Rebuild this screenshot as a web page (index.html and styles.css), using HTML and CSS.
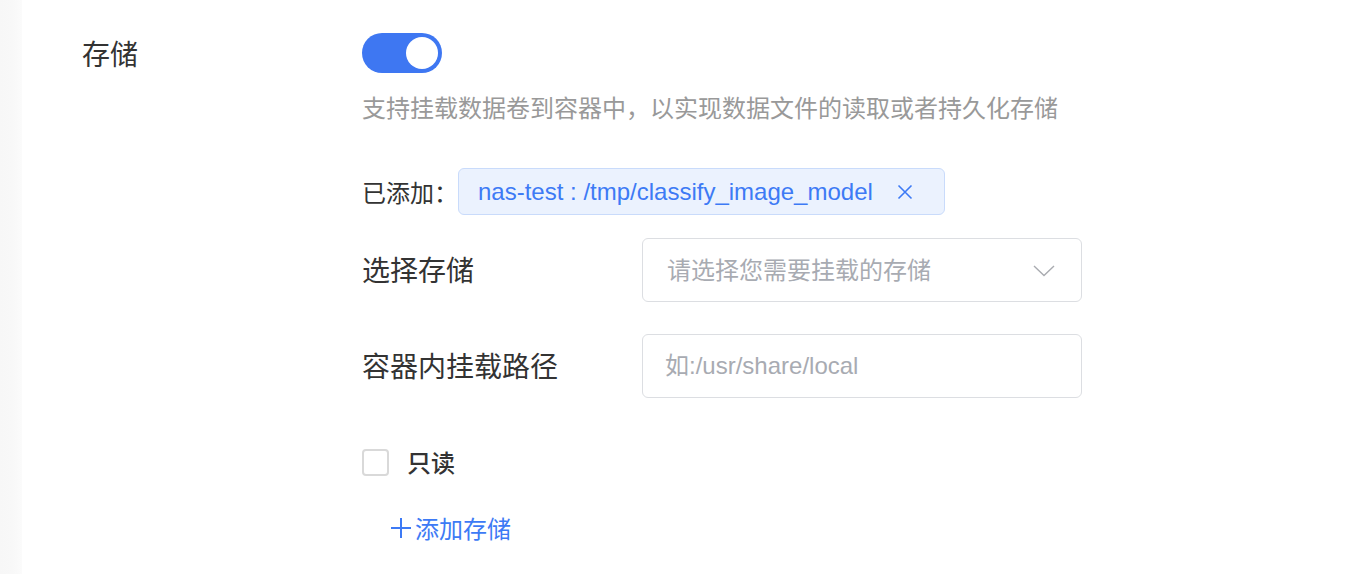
FILE: index.html
```html
<!DOCTYPE html>
<html lang="zh">
<head>
<meta charset="utf-8">
<title>存储</title>
<link rel="stylesheet" href="styles.css">
</head>
<body>
<div class="page">
  <div class="edge"></div>
  <div class="content">
    <div class="label-main">存储</div>
    <div class="fields">
      <div class="switch"><span class="knob"></span></div>
      <div class="desc">支持挂载数据卷到容器中，以实现数据文件的读取或者持久化存储</div>
      <div class="added">
        <span class="added-label">已添加：</span>
        <span class="tag">nas-test : /tmp/classify_image_model
          <svg class="tag-close" width="16" height="16" viewBox="0 0 16 16"><path d="M1.5 1.5 L14.5 14.5 M14.5 1.5 L1.5 14.5" stroke="#3d7af5" stroke-width="1.6" fill="none"/></svg>
        </span>
      </div>
      <div class="form-row first">
        <div class="form-label">选择存储</div>
        <div class="control">
          <span class="placeholder">请选择您需要挂载的存储</span>
          <svg class="chevron" width="22" height="12" viewBox="0 0 22 12"><path d="M1 1 L11 10.5 L21 1" stroke="#a9abb0" stroke-width="1.4" fill="none"/></svg>
        </div>
      </div>
      <div class="form-row">
        <div class="form-label">容器内挂载路径</div>
        <div class="control">
          <span class="placeholder input-ph">如:/usr/share/local</span>
        </div>
      </div>
      <label class="check-row">
        <span class="checkbox"></span>
        <span class="check-text">只读</span>
      </label>
      <div class="add-link">
        <svg class="plus" width="22" height="22" viewBox="0 0 22 22"><path d="M11 1 V21 M1 11 H21" stroke="#3d7af5" stroke-width="2" fill="none"/></svg>
        <span>添加存储</span>
      </div>
    </div>
  </div>
</div>
</body>
</html>
```

FILE: styles.css
```css
html, body {
  margin: 0;
  padding: 0;
  background: #ffffff;
}

body {
  font-family: "Noto Sans CJK SC", "Liberation Sans", sans-serif;
  color: #333333;
}

.page {
  display: flex;
  min-height: 574px;
}

.edge {
  width: 22px;
  flex: none;
  background: linear-gradient(to right, #f7f7f7 0%, #f8f8f8 55%, #fbfbfb 100%);
}

.content {
  flex: 1;
  display: flex;
  padding: 33px 0 0 60px;
}

.label-main {
  width: 280px;
  font-size: 28px;
  line-height: 40px;
  height: 40px;
  color: #333;
}

.fields {
  display: flex;
  flex-direction: column;
  align-items: flex-start;
}

.switch {
  width: 80px;
  height: 40px;
  border-radius: 20px;
  background: #3e77f2;
  display: flex;
  align-items: center;
  justify-content: flex-end;
  padding: 0 4px;
  box-sizing: border-box;
}

.knob {
  width: 32px;
  height: 32px;
  border-radius: 50%;
  background: #ffffff;
}

.desc {
  margin-top: 17px;
  font-size: 24px;
  line-height: 34px;
  color: #999999;
}

.added {
  margin-top: 44px;
  display: flex;
  align-items: center;
  height: 47px;
}

.added-label {
  font-size: 24px;
  color: #333;
}

.tag {
  display: flex;
  align-items: center;
  height: 47px;
  box-sizing: border-box;
  padding: 0 31px 0 19px;
  border: 1px solid #c9dbfb;
  border-radius: 6px;
  background: #ebf2fe;
  color: #3d7af5;
  font-family: "Liberation Sans", "Noto Sans CJK SC", sans-serif;
  font-size: 24px;
  line-height: 30px;
}

.tag-close {
  margin-left: 24px;
}

.form-row {
  display: flex;
  align-items: center;
  margin-top: 32px;
}

.form-row.first {
  margin-top: 23px;
}

.form-label {
  width: 280px;
  font-size: 28px;
  line-height: 38px;
  color: #333;
  margin-top: -3px;
}

.control {
  width: 440px;
  height: 64px;
  box-sizing: border-box;
  border: 1px solid #dcdee2;
  border-radius: 6px;
  display: flex;
  align-items: center;
  justify-content: space-between;
  padding: 0 26px 0 24px;
  background: #fff;
}

.placeholder {
  font-size: 24px;
  line-height: 30px;
  color: #a8abb2;
  margin-top: -3px;
}

.input-ph {
  margin-left: -2px;
  margin-top: -1px;
  font-family: "Liberation Sans", "Noto Sans CJK SC", sans-serif;
}

.chevron {
  margin-top: 2px;
}

.check-row {
  display: flex;
  align-items: center;
  margin-top: 51px;
  height: 27px;
}

.checkbox {
  width: 27px;
  height: 27px;
  box-sizing: border-box;
  border: 2px solid #d9d9d9;
  border-radius: 4px;
  background: #fff;
}

.check-text {
  margin-left: 18px;
  font-size: 24px;
  font-weight: 500;
  color: #333;
  margin-top: -2px;
}

.add-link {
  margin-top: 34px;
  margin-left: 28px;
  display: flex;
  align-items: center;
  height: 34px;
  font-size: 24px;
  color: #3d7af5;
}

.plus {
  margin-right: 3px;
  margin-top: 2px;
}
```
